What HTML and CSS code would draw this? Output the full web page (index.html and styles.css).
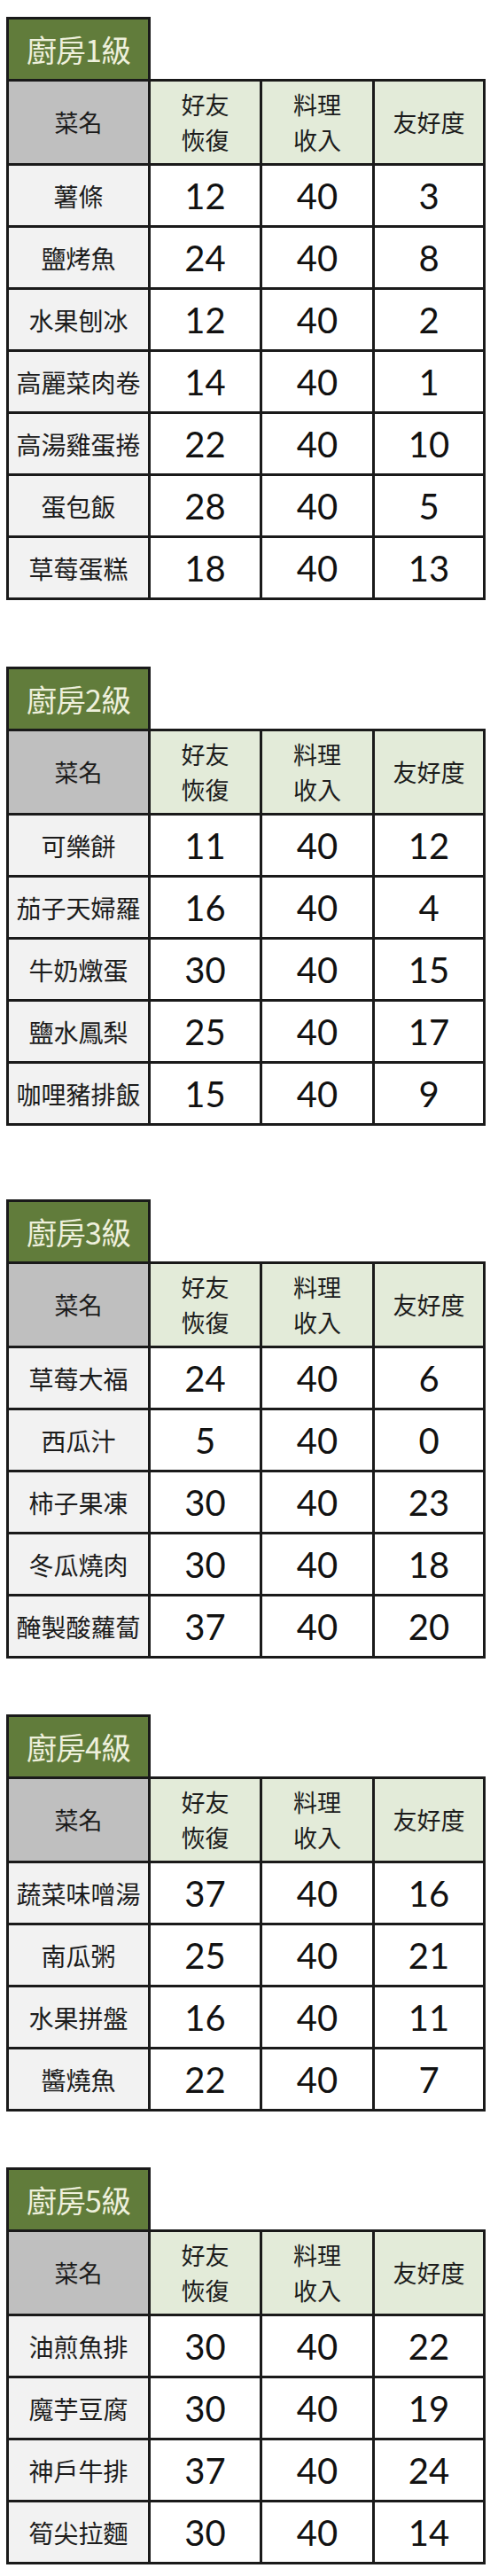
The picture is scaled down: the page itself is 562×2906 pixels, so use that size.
FILE: index.html
```html
<!DOCTYPE html>
<html lang="zh-Hant">
<head>
<meta charset="utf-8">
<title>廚房料理</title>
<link rel="stylesheet" href="styles.css">
</head>
<body>
<section class="kitchen k1">
  <div class="title">廚房1級</div>
  <div class="grid">
    <div class="hd hd-name">菜名</div><div class="hd">好友<br>恢復</div><div class="hd">料理<br>收入</div><div class="hd">友好度</div>
    <div class="nm">薯條</div><div class="num">12</div><div class="num">40</div><div class="num">3</div>
    <div class="nm">鹽烤魚</div><div class="num">24</div><div class="num">40</div><div class="num">8</div>
    <div class="nm">水果刨冰</div><div class="num">12</div><div class="num">40</div><div class="num">2</div>
    <div class="nm">高麗菜肉卷</div><div class="num">14</div><div class="num">40</div><div class="num">1</div>
    <div class="nm">高湯雞蛋捲</div><div class="num">22</div><div class="num">40</div><div class="num">10</div>
    <div class="nm">蛋包飯</div><div class="num">28</div><div class="num">40</div><div class="num">5</div>
    <div class="nm">草莓蛋糕</div><div class="num">18</div><div class="num">40</div><div class="num">13</div>
  </div>
</section>
<section class="kitchen k2">
  <div class="title">廚房2級</div>
  <div class="grid">
    <div class="hd hd-name">菜名</div><div class="hd">好友<br>恢復</div><div class="hd">料理<br>收入</div><div class="hd">友好度</div>
    <div class="nm">可樂餅</div><div class="num">11</div><div class="num">40</div><div class="num">12</div>
    <div class="nm">茄子天婦羅</div><div class="num">16</div><div class="num">40</div><div class="num">4</div>
    <div class="nm">牛奶燉蛋</div><div class="num">30</div><div class="num">40</div><div class="num">15</div>
    <div class="nm">鹽水鳳梨</div><div class="num">25</div><div class="num">40</div><div class="num">17</div>
    <div class="nm">咖哩豬排飯</div><div class="num">15</div><div class="num">40</div><div class="num">9</div>
  </div>
</section>
<section class="kitchen k3">
  <div class="title">廚房3級</div>
  <div class="grid">
    <div class="hd hd-name">菜名</div><div class="hd">好友<br>恢復</div><div class="hd">料理<br>收入</div><div class="hd">友好度</div>
    <div class="nm">草莓大福</div><div class="num">24</div><div class="num">40</div><div class="num">6</div>
    <div class="nm">西瓜汁</div><div class="num">5</div><div class="num">40</div><div class="num">0</div>
    <div class="nm">柿子果凍</div><div class="num">30</div><div class="num">40</div><div class="num">23</div>
    <div class="nm">冬瓜燒肉</div><div class="num">30</div><div class="num">40</div><div class="num">18</div>
    <div class="nm">醃製酸蘿蔔</div><div class="num">37</div><div class="num">40</div><div class="num">20</div>
  </div>
</section>
<section class="kitchen k4">
  <div class="title">廚房4級</div>
  <div class="grid">
    <div class="hd hd-name">菜名</div><div class="hd">好友<br>恢復</div><div class="hd">料理<br>收入</div><div class="hd">友好度</div>
    <div class="nm">蔬菜味噌湯</div><div class="num">37</div><div class="num">40</div><div class="num">16</div>
    <div class="nm">南瓜粥</div><div class="num">25</div><div class="num">40</div><div class="num">21</div>
    <div class="nm">水果拼盤</div><div class="num">16</div><div class="num">40</div><div class="num">11</div>
    <div class="nm">醬燒魚</div><div class="num">22</div><div class="num">40</div><div class="num">7</div>
  </div>
</section>
<section class="kitchen k5">
  <div class="title">廚房5級</div>
  <div class="grid">
    <div class="hd hd-name">菜名</div><div class="hd">好友<br>恢復</div><div class="hd">料理<br>收入</div><div class="hd">友好度</div>
    <div class="nm">油煎魚排</div><div class="num">30</div><div class="num">40</div><div class="num">22</div>
    <div class="nm">魔芋豆腐</div><div class="num">30</div><div class="num">40</div><div class="num">19</div>
    <div class="nm">神戶牛排</div><div class="num">37</div><div class="num">40</div><div class="num">24</div>
    <div class="nm">筍尖拉麵</div><div class="num">30</div><div class="num">40</div><div class="num">14</div>
  </div>
</section>
</body>
</html>
```

FILE: styles.css
```css
html, body {
  margin: 0;
  padding: 0;
  background: #ffffff;
}

body {
  font-family: "Noto Sans CJK TC", "Noto Sans", sans-serif;
  color: #1c1c1c;
  height: 2906px;
  overflow: hidden;
}

.kitchen {
  margin-left: 7px;
  width: 541px;
}

.k1 { padding-top: 19px; }
.k2 { margin-top: 75px; }
.k3 { margin-top: 83px; }
.k4 { margin-top: 63px; }
.k5 { margin-top: 63px; }

.title {
  box-sizing: border-box;
  width: 163px;
  height: 70px;
  border: 3px solid #1a1a1a;
  border-bottom: none;
  background: #617c3b;
  color: #eef0dc;
  font-size: 34px;
  font-weight: 400;
  display: flex;
  align-items: center;
  justify-content: center;
  letter-spacing: -1px;
}

.grid {
  display: grid;
  grid-template-columns: 157px 123px 124px 122px;
  grid-auto-rows: 67px;
  grid-template-rows: 92px;
  gap: 3px;
  padding: 3px;
  background: #1a1a1a;
}

.grid > div {
  display: flex;
  align-items: center;
  justify-content: center;
  text-align: center;
}

.hd {
  background: #e3ebd9;
  font-size: 27px;
  line-height: 40px;
}

.hd-name {
  background: #bfbfbf;
}

.nm {
  background: #f2f2f2;
  font-size: 28px;
  white-space: nowrap;
}

.num {
  background: #ffffff;
  font-family: "Lato", "Noto Sans", sans-serif;
  font-size: 40px;
  font-weight: 400;
  color: #111;
}
```
